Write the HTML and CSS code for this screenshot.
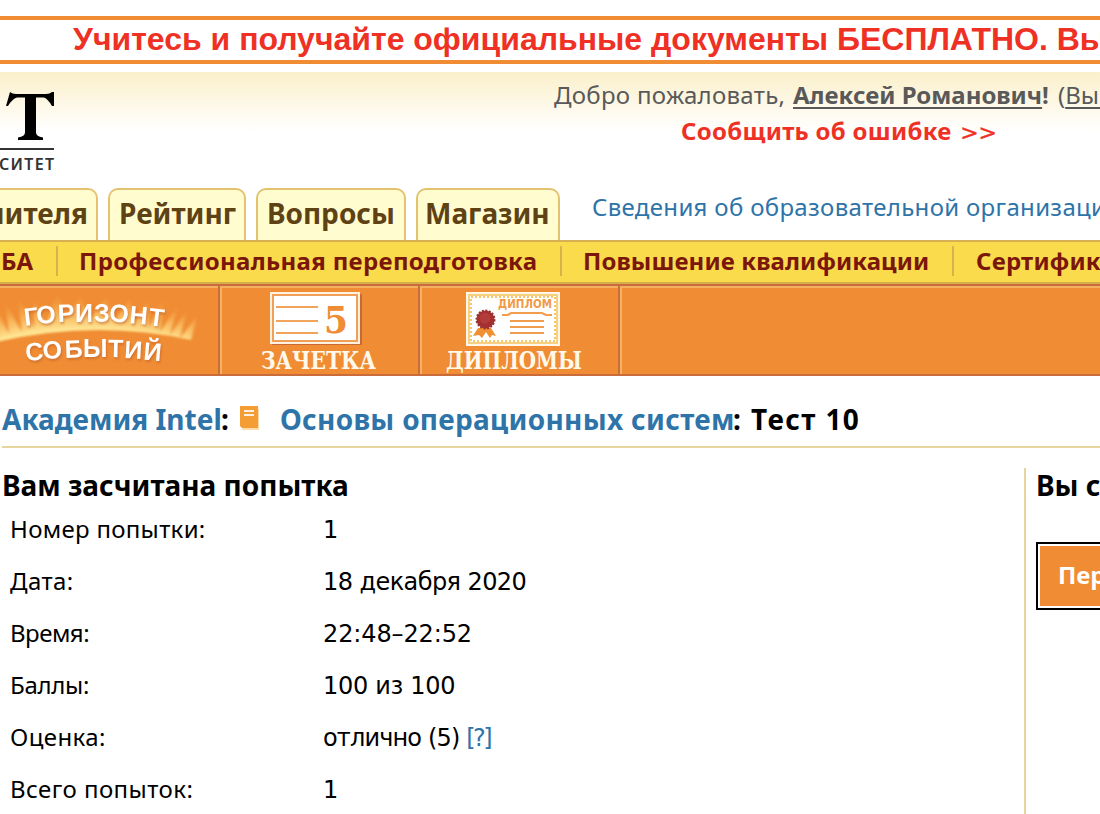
FILE: index.html
```html
<!DOCTYPE html>
<html lang="ru">
<head>
<meta charset="utf-8">
<title>Тест 10</title>
<link rel="stylesheet" href="styles.css">
</head>
<body>
<div class="banner"><span class="banner-text">Учитесь и получайте официальные документы БЕСПЛАТНО. Выбирайте</span></div>
<header class="header">
  <div class="top">
    <svg class="logo" width="60" height="108" viewBox="0 0 60 108">
      <path d="M10 20q2 2 6 2h30q4 0 6-2h2v14h-2q-4-7-8-8.500h-8v35q0 4 7 5v2.500H18v-2.500q7-1 7-5v-35h-8q-5 1.500-9 8.500H6z"/>
      <rect x="-2" y="76" width="56" height="2" fill="#333"/>
      <text class="logo-text" x="-1" y="98" textLength="55" lengthAdjust="spacing">СИТЕТ</text>
    </svg>
    <div class="user">
      <div class="welcome"><span class="hello">Добро пожаловать,</span><b class="name"><u>Алексей Романович</u>!</b><span class="exit">(<u>Выйти</u>)</span></div>
      <div class="report">Сообщить об ошибке <span class="arrows">&gt;&gt;</span></div>
    </div>
  </div>
  <nav class="tabs">
    <div class="tab tab-first"><span>Учителя</span></div>
    <div class="tab tab-rating"><span>Рейтинг</span></div>
    <div class="tab tab-questions"><span>Вопросы</span></div>
    <div class="tab tab-shop"><span>Магазин</span></div>
    <a class="org">Сведения об образовательной организации</a>
  </nav>
</header>
<nav class="subnav">
  <div class="sub sub-mba">БА</div>
  <div class="sub sub-prof">Профессиональная переподготовка</div>
  <div class="sub sub-qual">Повышение квалификации</div>
  <div class="sub sub-cert">Сертификация</div>
</nav>
<nav class="tiles">
  <div class="tile tile-first">
    <svg width="218" height="88" viewBox="0 286 218 88">
      <defs>
        <radialGradient id="glow" gradientUnits="userSpaceOnUse" cx="88" cy="700" r="412">
          <stop offset=".9" stop-color="#ffe795"/><stop offset=".94" stop-color="#fcc96c" stop-opacity=".65"/><stop offset="1" stop-color="#f08c33" stop-opacity="0"/>
        </radialGradient>
        <filter id="soft"><feGaussianBlur stdDeviation="1.800 .8"/></filter>
      </defs>
      <path filter="url(#soft)" fill="url(#glow)" d="M-4 342-4 308 9 334 5 302 22 332 17 292 34 328 34 300 46 324 58 290 65 320 80 296 90 320 106 296 114 322 130 298 134 324 148 300 149 328 165 294 160 332 178 305 170 335 187 310 180 338 197 316 191 340Q96 319-4 342z"/>
      <g class="arc-text">
        <text transform="translate(25 326) rotate(-7)">Г</text><text transform="translate(37 324) rotate(-5)">О</text><text transform="translate(58 322) rotate(-2)">Р</text><text x="75" y="321.500">И</text><text x="94" y="321.500">З</text><text transform="translate(109 321.500) rotate(3)">О</text><text transform="translate(129 323) rotate(5)">Н</text><text transform="translate(148 325) rotate(7)">Т</text>
        <text transform="translate(26 361) rotate(-5)">С</text><text transform="translate(43 359) rotate(-3)">О</text><text transform="translate(65 358) rotate(-2)">Б</text><text x="83" y="357">Ы</text><text transform="translate(108 357) rotate(1)">Т</text><text transform="translate(124 358) rotate(3)">И</text><text transform="translate(143 359.500) rotate(5)">Й</text>
      </g>
    </svg>
  </div>
  <div class="tile">
    <svg width="196" height="88" viewBox="222 286 196 88">
      <rect x="272" y="294" width="90" height="51" fill="#b65b3a" opacity=".7"/>
      <rect x="270" y="292" width="90" height="52" fill="#fff1df"/>
      <rect x="273" y="295" width="84" height="46" fill="#fff" stroke="#f0a057" stroke-width="2"/>
      <path d="M276 307h42M276 321h42M276 333h42" stroke="#f2a45c" stroke-width="2.200"/>
      <text class="grade" x="324" y="333" textLength="24" lengthAdjust="spacingAndGlyphs">5</text>
      <text class="tile-text" x="261" y="369" textLength="115" lengthAdjust="spacingAndGlyphs">ЗАЧЕТКА</text>
    </svg>
  </div>
  <div class="tile">
    <svg width="196" height="88" viewBox="422 286 196 88">
      <rect x="466" y="292" width="94" height="54" fill="#fff8e8"/>
      <rect x="469" y="295" width="88" height="48" fill="#fff" stroke="#f7cf80" stroke-width="2"/>
      <rect x="471" y="297" width="84" height="44" fill="none" stroke="#f5c76d" stroke-width="2" stroke-dasharray="2 2"/>
      <text class="diploma" x="498" y="308" textLength="54" lengthAdjust="spacingAndGlyphs">ДИПЛОМ</text>
      <path d="M502 315h6l3-2h31l4 2h6M510 321h34M510 327h34M510 333h34" fill="none" stroke="#f09d4d" stroke-width="2.200"/>
      <path d="M478 328l-5 8 6-1 3 3 4-6 4 6 2-3 4 1-5-8z" fill="#f09033"/>
      <circle cx="485.500" cy="319.500" r="9" fill="#a52f2e" stroke="#963330" stroke-width="2" stroke-dasharray="2 1.500"/>
      <circle cx="485" cy="318" r="5.500" fill="#b23c3a"/>
      <text class="tile-text" x="446" y="369" textLength="136" lengthAdjust="spacingAndGlyphs">ДИПЛОМЫ</text>
    </svg>
  </div>
  <div class="tile-rest"></div>
</nav>
<main class="main">
  <h1 class="crumbs"><a class="academy">Академия Intel</a><span class="colon">:</span>
    <svg class="book" width="21" height="26" viewBox="0 0 21 26"><path d="M2 3h17v21H2z" fill="#fbdcae"/><path d="M0 0h18v22H2L0 20z" fill="#f49d35"/><path d="M4 5h10M4 9h10" stroke="#fff0df" stroke-width="2"/></svg>
    <a class="course">Основы операционных систем</a><span class="test">: Тест 10</span></h1>
  <div class="columns">
    <section class="result">
      <h2 class="title">Вам засчитана попытка</h2>
      <dl class="facts">
        <dt class="k1">Номер попытки:</dt><dd>1</dd>
        <dt class="k2">Дата:</dt><dd class="date">18 декабря 2020</dd>
        <dt class="k3">Время:</dt><dd class="time">22:48–22:52</dd>
        <dt class="k4">Баллы:</dt><dd class="points">100 из 100</dd>
        <dt class="k5">Оценка:</dt><dd class="mark">отлично (5) <a>[?]</a></dd>
        <dt class="k6">Всего попыток:</dt><dd>1</dd>
      </dl>
    </section>
    <aside class="side">
      <h2 class="title">Вы сдали</h2>
      <button class="go">Перейти</button>
    </aside>
  </div>
</main>
</body>
</html>
```
FILE: styles.css
```css
* { box-sizing: border-box; }
body { margin: 0; width: 1100px; height: 814px; overflow: hidden; background: #fff; padding-top: 16px; font-family: "Noto Sans", "DejaVu Sans", sans-serif; font-size: 24px; white-space: nowrap; color: #000; }
.banner { height: 48px; border-top: 4px solid #f08c33; border-bottom: 4px solid #f08c33; padding-left: 73px; overflow: hidden; color: #ee3124; font: bold 32px/38px "Liberation Sans", sans-serif; }
.header { margin-top: 8px; height: 168px; background: linear-gradient(#fbf0cb, #fff 60px); overflow: hidden; }
.top { display: flex; height: 116px; }
.logo { flex: none; width: 60px; }
.logo-text { font: 600 16px "Noto Sans", sans-serif; fill: #333; }
.user { padding: 5px 0 0 494px; }
.welcome, .report { height: 36px; line-height: 36px; }
.welcome { display: flex; color: #595959; }
.welcome u { text-decoration-thickness: 2px; text-underline-offset: 3px; text-decoration-skip-ink: none; }
.hello { width: 239px; letter-spacing: .3px; }
.name { width: 265px; }
.report { padding-left: 127px; font-weight: bold; color: #ee3124; letter-spacing: .3px; }
.arrows { margin-left: 2px; font-family: "DejaVu Sans", sans-serif; font-weight: normal; font-size: 22px; letter-spacing: 0; -webkit-text-stroke: .4px #ee3124; }
.tabs { display: flex; height: 52px; }
.tab { flex: none; height: 52px; border: 2px solid #e4c270; border-bottom: 0; border-radius: 10px 10px 0 0; background: #fffdd0; color: #5f4213; font-weight: bold; font-size: 28px; line-height: 46px; padding-left: 9px; margin-right: 10px; overflow: hidden; }
.tab-first { width: 108px; margin-left: -10px; display: flex; justify-content: flex-end; padding-right: 8px; }
.tab-rating { width: 138px; }
.tab-questions { width: 150px; }
.tab-shop { width: 144px; padding-left: 7px; }
.org { padding-left: 22px; line-height: 38px; color: #2e74a8; letter-spacing: .33px; }
.subnav { display: flex; height: 44px; background: #fadb4b; border-top: 2px solid #d6b052; border-bottom: 2px solid #d6ad4b; color: #7b160b; font-weight: bold; padding-top: 4px; }
.sub { flex: none; height: 30px; line-height: 29px; border-left: 2px solid #dab14c; padding-left: 21px; }
.sub-mba { width: 56px; border: 0; padding-left: 1px; }
.sub-prof { width: 504px; letter-spacing: .34px; }
.sub-qual { width: 392px; letter-spacing: .12px; }
.sub-cert { padding-left: 22px; letter-spacing: .2px; }
.tiles { display: flex; height: 92px; background: #f08c33; border-top: 2px solid #c96b3b; border-bottom: 2px solid #c96b3b; }
.tile { flex: none; width: 200px; height: 88px; border-left: 2px solid #f5b262; border-right: 2px solid #c96e3b; box-shadow: inset 0 2px #f3b062; }
.tile-first { width: 220px; border-left: 0; }
.tile svg { display: block; }
.tile-rest { flex: 1; border-left: 2px solid #f5b262; box-shadow: inset 0 2px #f3b062; }
.tile-text { font: bold 24px "DejaVu Serif", serif; fill: #fff9ec; }
.arc-text { font: bold 25px "Liberation Sans", sans-serif; fill: #fff; filter: drop-shadow(1px 2px 1px #b75d3088); }
.grade { font: bold 38px "DejaVu Serif", serif; fill: #f08c33; }
.diploma { font: bold 12px "DejaVu Sans", sans-serif; fill: #f09a48; }
.main { padding: 24px 0 0 2px; }
.crumbs { display: flex; align-items: center; height: 48px; margin: 0; padding-bottom: 8px; border-bottom: 2px solid #e6d59e; font-size: 28px; line-height: 38px; }
.crumbs a, .mark a { color: #2e74a8; }
.academy { width: 219px; }
.colon { width: 19px; }
.book { flex: none; margin-top: 0; }
.course { width: 453px; margin-left: 19px; letter-spacing: .3px; }
.test { letter-spacing: 1.4px; }
.columns { display: flex; padding-top: 20px; }
.result { width: 1022px; }
.title { margin: 0; height: 36px; font-size: 28px; line-height: 34px; }
.facts { display: grid; grid-template-columns: 313px 1fr; grid-auto-rows: 52px; margin: 0; padding-left: 8px; line-height: 52px; }
.facts dt { line-height: 50px; }
.facts dd { margin: 0; font-family: "DejaVu Sans", sans-serif; }
.k1 { letter-spacing: .3px; }
.k2 { letter-spacing: .4px; }
.k3 { letter-spacing: -.5px; }
.k4 { letter-spacing: -.3px; }
.k5 { letter-spacing: .4px; }
.k6 { letter-spacing: .45px; }
.date { letter-spacing: -.58px; }
.time { letter-spacing: -.12px; }
.points { letter-spacing: -.3px; }
.mark { letter-spacing: -.85px; }
.mark a { letter-spacing: -2.5px; }
.side { width: 76px; height: 346px; border-left: 2px solid #e6d59e; padding-left: 10px; overflow: hidden; }
.go { width: 200px; height: 68px; margin-top: 38px; padding: 0 0 4px 20px; border: 2px solid #000; background: #f08c33; box-shadow: inset 0 0 0 2px #fff; color: #fff; font: bold 24px "Noto Sans", sans-serif; text-align: left; }
```
